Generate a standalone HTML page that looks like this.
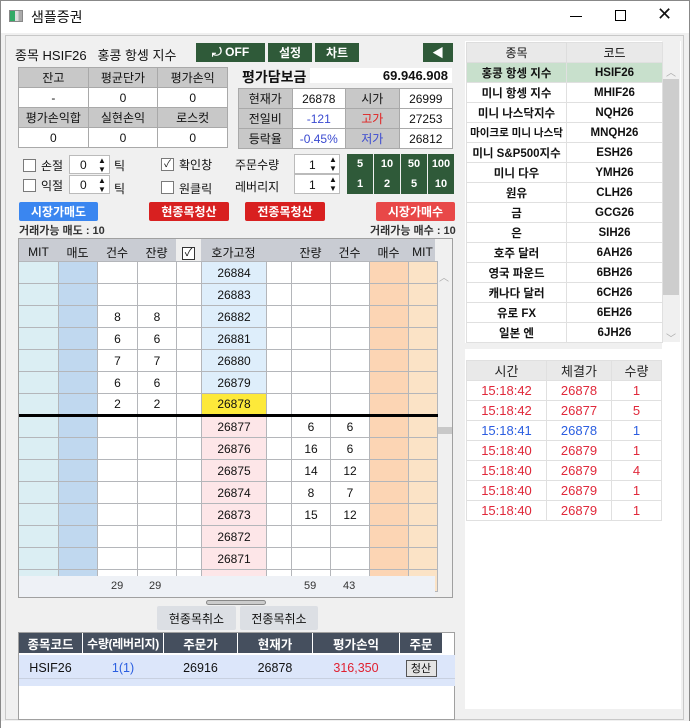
<!DOCTYPE html>
<html><head><meta charset="utf-8"><style>
*{box-sizing:border-box;margin:0;padding:0}
body{width:694px;height:728px;position:relative;overflow:hidden;background:#fff;font-family:"Liberation Sans","Noto Sans CJK KR",sans-serif;font-size:12px;color:#111}
.a{position:absolute}
.c{display:flex;align-items:center;justify-content:center;white-space:nowrap;flex:none}
.g{background:#2f5a39;color:#fff;font-weight:bold}
table{border-collapse:collapse;table-layout:fixed}
td{padding:0;text-align:center;overflow:hidden;white-space:nowrap}
.it td{border:1px solid #a9a9a9;height:20px}
.it .h{background:#c8c8c8}
.hg td{border:1px solid #b4b6ba;height:22px;font-size:12px}
.rt td{border:1px solid #e0e0e0;height:20px;font-weight:bold;font-size:11.5px}
.tt td{border:1px solid #e0e0e0;height:20px;font-size:13px;color:#e0283a}
.box{background:#fff;border:1px solid #7a7a7a}
.btn{color:#fff;font-weight:bold;font-size:12px;border-radius:2px}
</style></head><body>
<div class="a" style="left:0;top:0;width:690px;height:728px;border:1px solid #888;background:#f0f0f0"></div>
<div class="a" style="top:1px;left:1px;width:688px;height:32px;background:#fff"></div>
<div class="a" style="left:9px;top:10px;width:14px;height:12px;border:1px solid #888;background:linear-gradient(90deg,#3a6 0 40%,#ddd 40% 70%,#aaa 70%)"></div>
<div class="a" style="left:31px;top:7px;font-size:14px">샘플증권</div>
<div class="a" style="left:570px;top:16px;width:12px;height:1px;background:#000"></div>
<div class="a" style="left:615px;top:10px;width:11px;height:11px;border:1px solid #000"></div>
<div class="a" style="left:657px;top:4px;font-size:18px">✕</div>
<div class="a" style="left:5px;top:35px;width:679px;height:685px;border:1px solid #c8c8c8;background:#f0f0f0"></div>

<div class="a" style="left:15px;top:45px;font-size:13px">종목 HSIF26 &nbsp; 홍콩 항셍 지수</div>
<div class="a c g" style="left:196px;top:43px;width:69px;height:19px">⤾ OFF</div>
<div class="a c g" style="left:268px;top:43px;width:44px;height:19px">설정</div>
<div class="a c g" style="left:315px;top:43px;width:44px;height:19px">차트</div>
<div class="a c g" style="left:423px;top:43px;width:30px;height:19px">◀</div>

<table class="a it" style="left:18px;top:67px;width:210px">
<tr class="h"><td class="h">잔고</td><td class="h">평균단가</td><td class="h">평가손익</td></tr>
<tr style="background:#fff"><td>-</td><td>0</td><td>0</td></tr>
<tr><td class="h">평가손익합</td><td class="h">실현손익</td><td class="h">로스컷</td></tr>
<tr style="background:#fff"><td>0</td><td>0</td><td>0</td></tr>
</table>
<div class="a" style="left:242px;top:67px;font-size:14px;font-weight:bold">평가담보금</div>
<div class="a" style="left:310px;top:68px;width:142px;height:15px;background:#fff;text-align:right;font-size:13px;font-weight:bold;line-height:16px;padding-right:4px">69.946.908</div>
<table class="a it" style="left:238px;top:88px;width:215px">
<tr><td class="h">현재가</td><td style="background:#fff">26878</td><td class="h">시가</td><td style="background:#fff">26999</td></tr>
<tr><td class="h">전일비</td><td style="background:#fff;color:#3a4ad0">-121</td><td class="h" style="color:#e02020">고가</td><td style="background:#fff">27253</td></tr>
<tr><td class="h">등락율</td><td style="background:#fff;color:#3a4ad0">-0.45%</td><td class="h" style="color:#3a4ad0">저가</td><td style="background:#fff">26812</td></tr>
</table>

<div class="a box" style="left:23px;top:159px;width:13px;height:13px"></div><div class="a" style="left:41px;top:157px">손절</div>
<div class="a box" style="left:69px;top:155px;width:41px;height:19px;border-color:#bbb"><span class="a" style="left:10px;top:2px">0</span><span class="a" style="left:28px;top:0;font-size:8px;line-height:9px">▲<br>▼</span></div>
<div class="a" style="left:114px;top:157px">틱</div>
<div class="a box" style="left:23px;top:179px;width:13px;height:13px"></div><div class="a" style="left:41px;top:177px">익절</div>
<div class="a box" style="left:69px;top:175px;width:41px;height:19px;border-color:#bbb"><span class="a" style="left:10px;top:2px">0</span><span class="a" style="left:28px;top:0;font-size:8px;line-height:9px">▲<br>▼</span></div>
<div class="a" style="left:114px;top:180px">틱</div>
<div class="a box" style="left:161px;top:158px;width:13px;height:13px;font-size:10px;line-height:11px;text-align:center">✓</div><div class="a" style="left:179px;top:156px">확인창</div>
<div class="a box" style="left:161px;top:181px;width:13px;height:13px"></div><div class="a" style="left:179px;top:180px">원클릭</div>
<div class="a" style="left:235px;top:156px">주문수량</div>
<div class="a" style="left:235px;top:178px">레버리지</div>
<div class="a box" style="left:294px;top:154px;width:46px;height:20px;border-color:#bbb"><span class="a" style="left:14px;top:3px">1</span><span class="a" style="left:34px;top:0;font-size:8px;line-height:9px">▲<br>▼</span></div>
<div class="a box" style="left:294px;top:174px;width:46px;height:20px;border-color:#bbb"><span class="a" style="left:14px;top:3px">1</span><span class="a" style="left:34px;top:0;font-size:8px;line-height:9px">▲<br>▼</span></div>
<div class="a g" style="left:347px;top:154px;width:107px;height:40px;display:grid;grid-template-columns:repeat(4,1fr);font-size:11px;background:#f0f0f0;gap:0 1px">
<div class="c" style="background:#2f5a39">5</div><div class="c" style="background:#2f5a39">10</div><div class="c" style="background:#2f5a39">50</div><div class="c" style="background:#2f5a39">100</div>
<div class="c" style="background:#2f5a39">1</div><div class="c" style="background:#2f5a39">2</div><div class="c" style="background:#2f5a39">5</div><div class="c" style="background:#2f5a39">10</div></div>

<div class="a c btn" style="left:19px;top:202px;width:79px;height:19px;background:#3a86f0">시장가매도</div>
<div class="a c btn" style="left:149px;top:202px;width:80px;height:19px;background:#d82020">현종목청산</div>
<div class="a c btn" style="left:245px;top:202px;width:80px;height:19px;background:#d82020">전종목청산</div>
<div class="a c btn" style="left:376px;top:202px;width:79px;height:19px;background:#e84848">시장가매수</div>
<div class="a" style="left:19px;top:222px;font-size:11px;font-weight:bold;color:#333">거래가능 매도 : 10</div>
<div class="a" style="left:370px;top:222px;font-size:11px;font-weight:bold;color:#333">거래가능 매수 : 10</div>

<div class="a" style="left:18px;top:238px;width:435px;height:360px;border:1px solid #a0a0a0;background:#eef1f6;overflow:hidden">
<div class="a" style="left:0;top:0;width:416px;height:25px;background:#c9ccd3"></div>
<div class="a" style="left:416px;top:0;width:18px;height:360px;background:#f0f0f0"></div>
<div class="a" style="left:416px;top:188px;width:17px;height:7px;background:#c8c8c8"></div>
<div class="a" style="left:420px;top:30px;color:#aaa;font-size:10px">︿</div>
<table class="a hg" style="left:0;top:0;width:418px">
<colgroup><col style="width:39px"><col style="width:39px"><col style="width:40px"><col style="width:39px"><col style="width:25px"><col style="width:65px"><col style="width:25px"><col style="width:39px"><col style="width:39px"><col style="width:39px"><col style="width:29px"></colgroup>
<tr style="height:26px;font-size:12px"><td style="border:none">MIT</td><td style="border:none">매도</td><td style="border:none">건수</td><td style="border:none">잔량</td><td style="border:none;background:#eee"><span style="display:inline-block;width:13px;height:13px;border:1px solid #333;background:#fff;font-size:11px;line-height:11px">✓</span></td><td style="border:none">호가고정</td><td style="border:none"></td><td style="border:none">잔량</td><td style="border:none">건수</td><td style="border:none">매수</td><td style="border:none">MIT</td></tr>
</table>
<table class="a hg" style="left:-1px;top:22px;width:419px;background:#fff">
<colgroup><col style="width:40px"><col style="width:39px"><col style="width:40px"><col style="width:39px"><col style="width:25px"><col style="width:65px"><col style="width:25px"><col style="width:39px"><col style="width:39px"><col style="width:39px"><col style="width:29px"></colgroup>
<tr><td style="background:#dbeef3"></td><td style="background:#c0d8ef"></td><td></td><td></td><td></td><td style="background:#deeefb">26884</td><td></td><td></td><td></td><td style="background:#fcd5b4"></td><td style="background:#fbe3c6"></td></tr>
<tr><td style="background:#dbeef3"></td><td style="background:#c0d8ef"></td><td></td><td></td><td></td><td style="background:#deeefb">26883</td><td></td><td></td><td></td><td style="background:#fcd5b4"></td><td style="background:#fbe3c6"></td></tr>
<tr><td style="background:#dbeef3"></td><td style="background:#c0d8ef"></td><td>8</td><td>8</td><td></td><td style="background:#deeefb">26882</td><td></td><td></td><td></td><td style="background:#fcd5b4"></td><td style="background:#fbe3c6"></td></tr>
<tr><td style="background:#dbeef3"></td><td style="background:#c0d8ef"></td><td>6</td><td>6</td><td></td><td style="background:#deeefb">26881</td><td></td><td></td><td></td><td style="background:#fcd5b4"></td><td style="background:#fbe3c6"></td></tr>
<tr><td style="background:#dbeef3"></td><td style="background:#c0d8ef"></td><td>7</td><td>7</td><td></td><td style="background:#deeefb">26880</td><td></td><td></td><td></td><td style="background:#fcd5b4"></td><td style="background:#fbe3c6"></td></tr>
<tr><td style="background:#dbeef3"></td><td style="background:#c0d8ef"></td><td>6</td><td>6</td><td></td><td style="background:#deeefb">26879</td><td></td><td></td><td></td><td style="background:#fcd5b4"></td><td style="background:#fbe3c6"></td></tr>
<tr style="border-bottom:3px solid #000"><td style="background:#dbeef3"></td><td style="background:#c0d8ef"></td><td>2</td><td>2</td><td></td><td style="background:#fde93a">26878</td><td></td><td></td><td></td><td style="background:#fcd5b4"></td><td style="background:#fbe3c6"></td></tr>
<tr><td style="background:#dbeef3"></td><td style="background:#c0d8ef"></td><td></td><td></td><td></td><td style="background:#fde6e8">26877</td><td></td><td>6</td><td>6</td><td style="background:#fcd5b4"></td><td style="background:#fbe3c6"></td></tr>
<tr><td style="background:#dbeef3"></td><td style="background:#c0d8ef"></td><td></td><td></td><td></td><td style="background:#fde6e8">26876</td><td></td><td>16</td><td>6</td><td style="background:#fcd5b4"></td><td style="background:#fbe3c6"></td></tr>
<tr><td style="background:#dbeef3"></td><td style="background:#c0d8ef"></td><td></td><td></td><td></td><td style="background:#fde6e8">26875</td><td></td><td>14</td><td>12</td><td style="background:#fcd5b4"></td><td style="background:#fbe3c6"></td></tr>
<tr><td style="background:#dbeef3"></td><td style="background:#c0d8ef"></td><td></td><td></td><td></td><td style="background:#fde6e8">26874</td><td></td><td>8</td><td>7</td><td style="background:#fcd5b4"></td><td style="background:#fbe3c6"></td></tr>
<tr><td style="background:#dbeef3"></td><td style="background:#c0d8ef"></td><td></td><td></td><td></td><td style="background:#fde6e8">26873</td><td></td><td>15</td><td>12</td><td style="background:#fcd5b4"></td><td style="background:#fbe3c6"></td></tr>
<tr><td style="background:#dbeef3"></td><td style="background:#c0d8ef"></td><td></td><td></td><td></td><td style="background:#fde6e8">26872</td><td></td><td></td><td></td><td style="background:#fcd5b4"></td><td style="background:#fbe3c6"></td></tr>
<tr><td style="background:#dbeef3"></td><td style="background:#c0d8ef"></td><td></td><td></td><td></td><td style="background:#fde6e8">26871</td><td></td><td></td><td></td><td style="background:#fcd5b4"></td><td style="background:#fbe3c6"></td></tr>
<tr><td style="background:#dbeef3"></td><td style="background:#c0d8ef"></td><td></td><td></td><td></td><td style="background:#fde6e8">26870</td><td></td><td></td><td></td><td style="background:#fcd5b4"></td><td style="background:#fbe3c6"></td></tr>
</table>
<div class="a" style="left:0;top:337px;width:416px;height:22px;background:#eef1f6;font-size:11px;color:#333">
<span class="a" style="left:92px;top:4px">29</span><span class="a" style="left:130px;top:4px">29</span><span class="a" style="left:285px;top:4px">59</span><span class="a" style="left:324px;top:4px">43</span></div>
</div>
<div class="a" style="left:206px;top:600px;width:60px;height:5px;border:1px solid #888;border-radius:3px;background:#ccc"></div>
<div class="a c" style="left:157px;top:606px;width:79px;height:24px;background:#dcdfe4;border-radius:2px">현종목취소</div>
<div class="a c" style="left:240px;top:606px;width:78px;height:24px;background:#dcdfe4;border-radius:2px">전종목취소</div>

<div class="a" style="left:18px;top:632px;width:437px;height:88px;border:1px solid #a0a0a0;background:#fff"></div>
<div class="a" style="left:19px;top:633px;width:430px;height:20px;display:flex;gap:1px;color:#fff;font-weight:bold;font-size:12.5px">
<div class="c" style="width:63px;background:#454f5e">종목코드</div><div class="c" style="width:80px;background:#454f5e;font-size:12px;letter-spacing:-0.3px">수량(레버리지)</div><div class="c" style="width:73px;background:#454f5e">주문가</div><div class="c" style="width:74px;background:#454f5e">현재가</div><div class="c" style="width:86px;background:#454f5e">평가손익</div><div class="c" style="width:42px;background:#454f5e">주문</div></div>
<div class="a" style="left:19px;top:655px;width:436px;height:31px;background:#dce6fa"></div>
<div class="a" style="left:19px;top:678px;width:436px;height:1px;background:#c8d0e0"></div>
<div class="a" style="left:19px;top:659px;width:430px;height:18px;display:flex;gap:1px;font-size:12.5px">
<div class="c" style="width:63px">HSIF26</div><div class="c" style="width:80px;color:#2a5ee0">1(1)</div><div class="c" style="width:73px">26916</div><div class="c" style="width:74px">26878</div><div class="c" style="width:86px;color:#e02030">316,350</div><div class="c" style="width:42px"><span class="c" style="width:31px;height:17px;border:1px solid #555;background:#e4e4e4;font-size:11px">청산</span></div></div>

<div class="a" style="left:465px;top:41px;width:216px;height:668px;background:#fff"></div>
<div class="a" style="left:662px;top:41px;width:18px;height:301px;background:#f0f0f0"></div>
<div class="a" style="left:662px;top:79px;width:17px;height:216px;background:#cdcdcd"></div>
<div class="a" style="left:666px;top:64px;color:#aaa;font-size:10px">︿</div>
<div class="a" style="left:666px;top:330px;color:#aaa;font-size:10px">﹀</div>
<table class="a rt" style="left:466px;top:42px;width:196px">
<colgroup><col style="width:100px"><col style="width:96px"></colgroup>
<tr style="background:#e9e9e9"><td style="font-weight:normal;font-size:12px;border-color:#ddd">종목</td><td style="font-weight:normal;font-size:12px">코드</td></tr>
<tr style="background:#c8e0cc"><td>홍콩 항셍 지수</td><td>HSIF26</td></tr>
<tr><td>미니 항셍 지수</td><td>MHIF26</td></tr>
<tr><td>미니 나스닥지수</td><td>NQH26</td></tr>
<tr><td style="font-size:10.5px">마이크로 미니 나스닥</td><td>MNQH26</td></tr>
<tr><td>미니 S&amp;P500지수</td><td>ESH26</td></tr>
<tr><td>미니 다우</td><td>YMH26</td></tr>
<tr><td>원유</td><td>CLH26</td></tr>
<tr><td>금</td><td>GCG26</td></tr>
<tr><td>은</td><td>SIH26</td></tr>
<tr><td>호주 달러</td><td>6AH26</td></tr>
<tr><td>영국 파운드</td><td>6BH26</td></tr>
<tr><td>캐나다 달러</td><td>6CH26</td></tr>
<tr><td>유로 FX</td><td>6EH26</td></tr>
<tr><td>일본 엔</td><td>6JH26</td></tr>
</table>
<div class="a" style="left:465px;top:343px;width:197px;height:6px;background:#f0f0f0"></div>
<div class="a" style="left:465px;top:349px;width:216px;height:10px;background:#fff"></div>
<table class="a tt" style="left:466px;top:360px;width:195px">
<colgroup><col style="width:80px"><col style="width:65px"><col style="width:50px"></colgroup>
<tr style="background:#e9e9e9"><td style="color:#222">시간</td><td style="color:#222">체결가</td><td style="color:#222">수량</td></tr>
<tr><td>15:18:42</td><td>26878</td><td>1</td></tr>
<tr><td>15:18:42</td><td>26877</td><td>5</td></tr>
<tr><td style="color:#2a5ee0">15:18:41</td><td style="color:#2a5ee0">26878</td><td style="color:#2a5ee0">1</td></tr>
<tr><td>15:18:40</td><td>26879</td><td>1</td></tr>
<tr><td>15:18:40</td><td>26879</td><td>4</td></tr>
<tr><td>15:18:40</td><td>26879</td><td>1</td></tr>
<tr><td>15:18:40</td><td>26879</td><td>1</td></tr>
</table>
<div class="a" style="left:1px;top:721px;width:689px;height:7px;background:#fff"></div>
</body></html>
